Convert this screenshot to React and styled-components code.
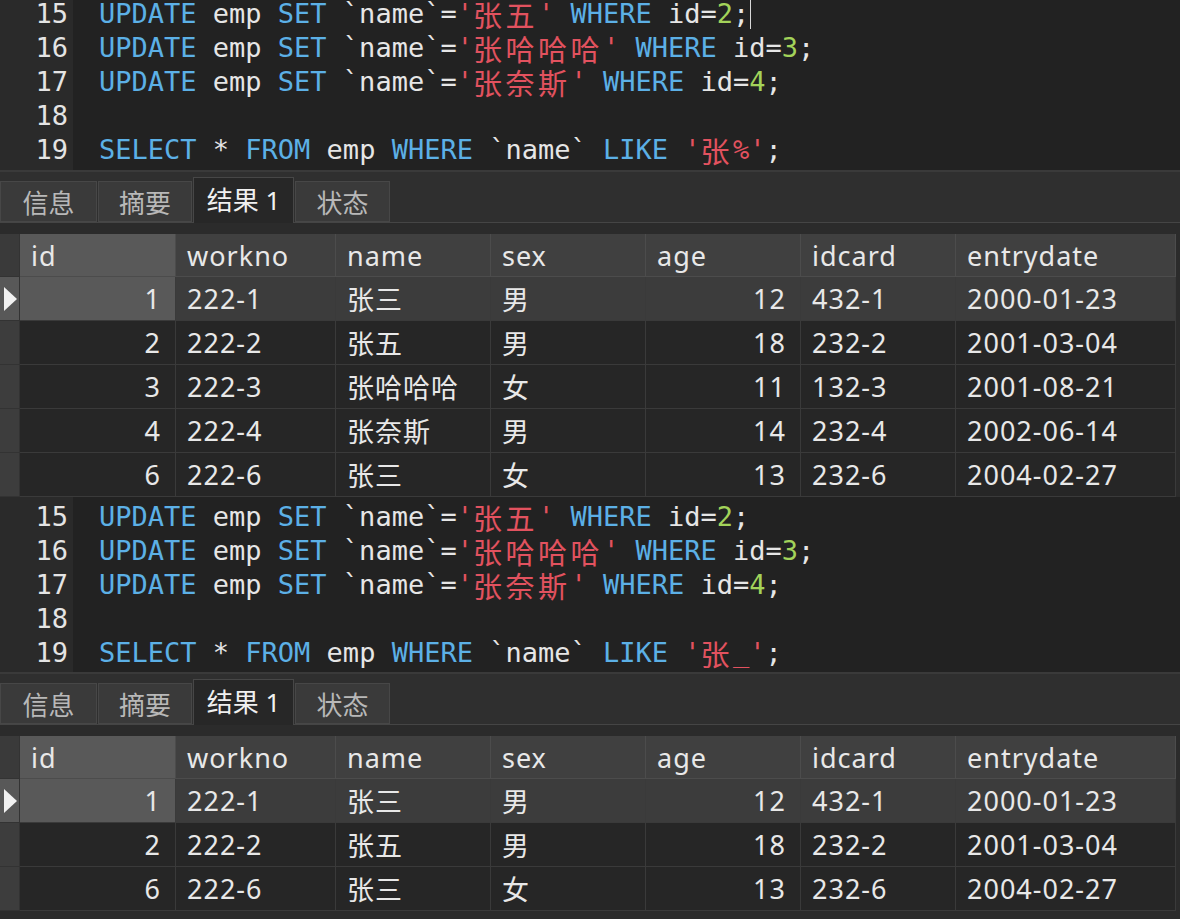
import React from "react";
import styled, { createGlobalStyle } from "styled-components";

const GlobalStyle = createGlobalStyle`
  html, body {
    margin: 0;
    padding: 0;
    background: #2b2b2b;
    overflow: hidden;
  }
`;

const Page = styled.div`
  width: 1180px;
  height: 919px;
  display: flex;
  flex-direction: column;
  background: #2b2b2b;
`;

/* ---------- editor ---------- */

const Editor = styled.div`
  height: ${(p) => p.$height}px;
  display: grid;
  grid-template-columns: 73px 1fr;
  overflow: hidden;
  background: #222222;
  flex: none;
`;

const Gutter = styled.div`
  background: #2a2a2a;
`;

const Lines = styled.div`
  margin-top: ${(p) => p.$offset}px;
`;

const Code = styled.div`
  padding-left: 26px;
`;

const LineNo = styled.div`
  height: 34px;
  line-height: 34px;
  text-align: right;
  padding-right: 5px;
  font-family: "DejaVu Sans Mono", monospace;
  font-size: 27px;
  color: #e4e4e4;
`;

const Line = styled.div`
  height: 34px;
  line-height: 34px;
  white-space: pre;
  font-family: "DejaVu Sans Mono", monospace;
  font-size: 27px;
  color: #e6e6e6;
`;

const colors = {
  kw: "#5cb0e6",
  str: "#e2525f",
  num: "#a3d35a",
  txt: "#e6e6e6",
};

const Tok = styled.span`
  color: ${(p) => colors[p.$kind]};
`;

const Cjk = styled.span`
  display: inline-block;
  vertical-align: top;
  height: 34px;
  line-height: 34px;
  font-family: "Noto Sans CJK SC", sans-serif;
  font-size: 29px;
  letter-spacing: 3.5px;
`;

const Caret = styled.span`
  display: inline-block;
  width: 1px;
  height: 30px;
  background: #d8d8d8;
  vertical-align: -6px;
  margin-left: 1px;
`;

const splitCjk = (text) =>
  text.split(/([\u4e00-\u9fff]+)/).map((part, i) =>
    /[\u4e00-\u9fff]/.test(part) ? <Cjk key={i}>{part}</Cjk> : part
  );

const updateLine = (name, id) => [
  ["kw", "UPDATE"],
  ["txt", " emp "],
  ["kw", "SET"],
  ["txt", " `name`="],
  ["str", `'${name}'`],
  ["txt", " "],
  ["kw", "WHERE"],
  ["txt", " id="],
  ["num", id],
  ["txt", ";"],
];

const selectLine = (pattern) => [
  ["kw", "SELECT"],
  ["txt", " * "],
  ["kw", "FROM"],
  ["txt", " emp "],
  ["kw", "WHERE"],
  ["txt", " `name` "],
  ["kw", "LIKE"],
  ["txt", " "],
  ["str", `'${pattern}'`],
  ["txt", ";"],
];

function CodePanel({ pattern, caret, offset, height }) {
  const lines = [
    [15, updateLine("张五", "2"), caret],
    [16, updateLine("张哈哈哈", "3")],
    [17, updateLine("张奈斯", "4")],
    [18, []],
    [19, selectLine(pattern)],
  ];
  return (
    <Editor $height={height}>
      <Gutter>
        <Lines $offset={offset}>
          {lines.map(([n]) => (
            <LineNo key={n}>{n}</LineNo>
          ))}
        </Lines>
      </Gutter>
      <Code>
        <Lines $offset={offset}>
          {lines.map(([n, toks, hasCaret]) => (
            <Line key={n}>
              {toks.map(([kind, text], i) => (
                <Tok key={i} $kind={kind}>
                  {splitCjk(text)}
                </Tok>
              ))}
              {hasCaret && <Caret />}
            </Line>
          ))}
        </Lines>
      </Code>
    </Editor>
  );
}

/* ---------- tabs ---------- */

const Divider = styled.div`
  height: 2px;
  background: #3a3a3a;
  flex: none;
`;

const TabBar = styled.div`
  height: 51px;
  display: flex;
  align-items: flex-end;
  gap: 1px;
  background: #2f2f2f;
  border-bottom: 1px solid #454545;
  box-sizing: border-box;
  flex: none;
`;

const Tab = styled.div`
  width: ${(p) => p.$w}px;
  height: ${(p) => (p.$active ? 46 : 41)}px;
  margin-bottom: ${(p) => (p.$active ? -1 : 0)}px;
  box-sizing: border-box;
  display: flex;
  align-items: center;
  justify-content: center;
  background: ${(p) => (p.$active ? "#272727" : "#3a3a3a")};
  border: 1px solid #474747;
  border-bottom: ${(p) => (p.$active ? "none" : "1px solid #474747")};
  font-family: "Noto Sans", "Noto Sans CJK SC", sans-serif;
  font-size: 26px;
  color: ${(p) => (p.$active ? "#f0f0f0" : "#b8b8b8")};
  padding-bottom: ${(p) => (p.$active ? 4 : 0)}px;
`;

const TabGap = styled.div`
  height: 11px;
  background: #2b2b2b;
  flex: none;
`;

function Tabs() {
  return (
    <>
      <Divider />
      <TabBar>
        <Tab $w={97}>信息</Tab>
        <Tab $w={94}>摘要</Tab>
        <Tab $w={101} $active>
          结果 1
        </Tab>
        <Tab $w={95}>状态</Tab>
      </TabBar>
      <TabGap />
    </>
  );
}

/* ---------- grid ---------- */

const Grid = styled.div`
  width: 1176px;
  display: flex;
  flex-direction: column;
  flex: none;
`;

const Row = styled.div`
  display: grid;
  grid-template-columns: 20px 156px 160px 155px 155px 155px 155px 220px;
  height: ${(p) => (p.$header ? 43 : 44)}px;
`;

const Cell = styled.div`
  box-sizing: border-box;
  border-right: 1px solid ${(p) => (p.$header ? "#4c4c4c" : "#3a3a3a")};
  border-bottom: 1px solid ${(p) => (p.$header ? "#4c4c4c" : "#3a3a3a")};
  background: ${(p) => p.$bg};
  display: flex;
  align-items: center;
  justify-content: ${(p) => (p.$right ? "flex-end" : "flex-start")};
  padding: ${(p) => (p.$right ? "0 14px 0 0" : "0 0 0 11px")};
  font-family: "Noto Sans", "Noto Sans CJK SC", sans-serif;
  font-size: 27px;
  letter-spacing: 1px;
  color: #e8e8e8;
  white-space: nowrap;
`;

const Marker = styled.div`
  box-sizing: border-box;
  background: ${(p) => p.$bg};
  border-bottom: 1px solid #333333;
  border-right: 1px solid #333333;
  display: flex;
  align-items: center;
  justify-content: flex-start;
  padding-left: 3px;
`;

const columns = ["id", "workno", "name", "sex", "age", "idcard", "entrydate"];

function DataGrid({ rows }) {
  return (
    <Grid>
      <Row $header>
        <Marker $bg="#3a3a3a" />
        {columns.map((c, i) => (
          <Cell key={c} $header $bg={i === 0 ? "#595959" : "#404040"}>
            {c}
          </Cell>
        ))}
      </Row>
      {rows.map((r, ri) => {
        const sel = ri === 0;
        const base = sel ? "#3c3c3c" : "#262626";
        return (
          <Row key={r[0]}>
            <Marker $bg={sel ? "#585858" : "#3d3d3d"}>
              {sel && (
                <svg width="15" height="24" viewBox="0 0 15 24">
                  <polygon points="1,0 14,12 1,24" fill="#f2f2f2" />
                </svg>
              )}
            </Marker>
            {r.map((v, ci) => (
              <Cell
                key={ci}
                $right={ci === 0 || ci === 4}
                $bg={sel && ci === 0 ? "#595959" : base}
              >
                {v}
              </Cell>
            ))}
          </Row>
        );
      })}
    </Grid>
  );
}

const firstRows = [
  ["1", "222-1", "张三", "男", "12", "432-1", "2000-01-23"],
  ["2", "222-2", "张五", "男", "18", "232-2", "2001-03-04"],
  ["3", "222-3", "张哈哈哈", "女", "11", "132-3", "2001-08-21"],
  ["4", "222-4", "张奈斯", "男", "14", "232-4", "2002-06-14"],
  ["6", "222-6", "张三", "女", "13", "232-6", "2004-02-27"],
];

const secondRows = [
  ["1", "222-1", "张三", "男", "12", "432-1", "2000-01-23"],
  ["2", "222-2", "张五", "男", "18", "232-2", "2001-03-04"],
  ["6", "222-6", "张三", "女", "13", "232-6", "2004-02-27"],
];

export default function App() {
  return (
    <>
      <GlobalStyle />
      <Page>
        <CodePanel pattern="张%" caret offset={-3} height={170} />
        <Tabs />
        <DataGrid rows={firstRows} />
        <CodePanel pattern="张_" offset={3} height={175} />
        <Tabs />
        <DataGrid rows={secondRows} />
      </Page>
    </>
  );
}
